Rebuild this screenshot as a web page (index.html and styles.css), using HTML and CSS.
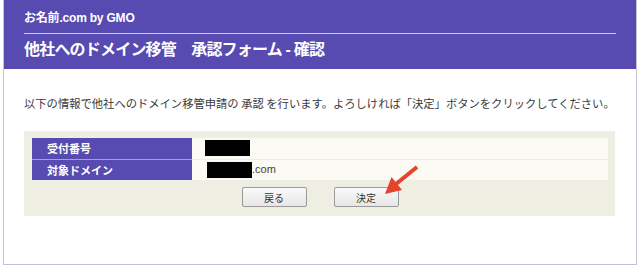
FILE: index.html
```html
<!DOCTYPE html>
<html lang="ja">
<head>
    <meta charset="UTF-8">
    <meta name="viewport" content="width=device-width, initial-scale=1.0">
    <title>他社へのドメイン移管 承認フォーム - 確認</title>
    <link rel="stylesheet" href="styles.css">
</head>
<body>
    <div class="page">
        <div class="header">
            <div class="logo">お名前.com by GMO</div>
            <h1>他社へのドメイン移管　承認フォーム - 確認</h1>
        </div>

        <p class="lead">以下の情報で他社へのドメイン移管申請の 承認 を行います。よろしければ「決定」ボタンをクリックしてください。</p>

        <div class="panel">
            <table class="info">
                <tr>
                    <th>受付番号</th>
                    <td><span class="masked"></span></td>
                </tr>
                <tr>
                    <th>対象ドメイン</th>
                    <td><span class="masked shift"></span>.com</td>
                </tr>
            </table>
            <div class="actions">
                <button type="button">戻る</button>
                <button type="button">決定</button>
            </div>
            <svg class="pointer" width="40" height="32" viewBox="0 0 40 32">
                <line x1="34" y1="2" x2="13" y2="19" stroke="#e5432b" stroke-width="4"/>
                <polygon points="2,29 19,25 8.5,12" fill="#e5432b"/>
            </svg>
        </div>
    </div>
</body>
</html>
```

FILE: styles.css
```css
* {
    margin: 0;
    padding: 0;
    box-sizing: border-box;
}

body {
    background: #fff;
    font-family: 'Liberation Sans', 'Noto Sans CJK JP', sans-serif;
    color: #333;
}

.page {
    margin: 0 3px;
    height: 265px;
    border: 1px solid #c4c0d8;
    border-top: none;
}

.header {
    background: #574bb1;
    color: #fff;
    padding: 10px 20px 7px;
}

.logo {
    font-size: 12px;
    font-weight: bold;
    line-height: 16px;
    padding-bottom: 7px;
    border-bottom: 1px solid #cfcaf0;
    letter-spacing: -0.2px;
}

h1 {
    font-size: 16px;
    font-weight: bold;
    line-height: 24px;
    margin-top: 4px;
    letter-spacing: -0.8px;
}

.lead {
    font-family: 'Noto Sans CJK JP', sans-serif;
    font-size: 11.3px;
    line-height: 16px;
    margin: 26px 20px 0;
    color: #3a3a3a;
    white-space: nowrap;
}

.panel {
    position: relative;
    background: #efeee3;
    margin: 20px 21px 0 20px;
    padding: 7px 7px 9px 8px;
}

.info {
    width: 100%;
    border-collapse: collapse;
    font-size: 11px;
}

.info th {
    width: 160px;
    height: 21px;
    background: #574bb1;
    color: #fff;
    text-align: left;
    font-weight: bold;
    padding-left: 15px;
    font-family: 'Noto Sans CJK JP', sans-serif;
}

.info td {
    background: #fbfaf3;
    padding-left: 13px;
    color: #444;
    vertical-align: middle;
}

.info tr:first-child th {
    border-bottom: 1px solid #a69fe0;
}

.info tr:first-child td {
    border-bottom: 1px solid #f1eee0;
}

.masked {
    display: inline-block;
    width: 45px;
    height: 16px;
    background: #000;
    vertical-align: middle;
}

.masked.shift {
    margin-left: 2px;
}

.actions {
    display: flex;
    justify-content: center;
    gap: 27px;
    margin-top: 7px;
}

.actions button {
    width: 65px;
    height: 20px;
    font-family: 'Noto Sans CJK JP', sans-serif;
    font-size: 10px;
    color: #333;
    background: linear-gradient(#fafafa, #e6e6e6);
    border: 1px solid #9a9a9a;
    border-radius: 2px;
}

.pointer {
    position: absolute;
    left: 359px;
    top: 34px;
}
```
